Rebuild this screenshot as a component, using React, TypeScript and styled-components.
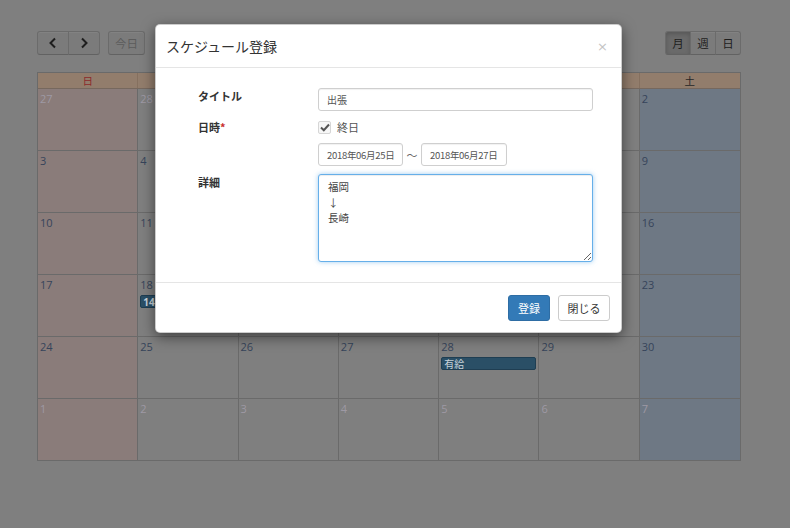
import React from "react";
import styled, { createGlobalStyle } from "styled-components";

const GlobalStyle = createGlobalStyle`
  html, body { margin: 0; padding: 0; }
  body {
    background: #7f7f7f;
    font-family: "Noto Sans CJK JP", "Open Sans", sans-serif;
  }
  * { box-sizing: border-box; }
`;

const Page = styled.div`
  position: relative;
  width: 790px;
  height: 528px;
  overflow: hidden;
  padding: 31px 49px 0 37px;
  background: #7f7f7f;
`;

const Toolbar = styled.div`
  display: flex;
  justify-content: space-between;
  align-items: center;
  height: 24px;
  margin-bottom: 17px;
`;

const ToolGroup = styled.div`
  display: flex;
  align-items: center;
  gap: 8px;
`;

const ButtonGroup = styled.div`
  display: flex;
`;

const ToolButton = styled.div<{ $w: number; $active?: boolean; $disabled?: boolean }>`
  width: ${(p) => p.$w}px;
  height: 24px;
  display: flex;
  align-items: center;
  justify-content: center;
  background: ${(p) => (p.$active ? "#6a6a6a" : "#7b7b7b")};
  box-shadow: ${(p) => (p.$active ? "inset 0 2px 4px rgba(0,0,0,0.18)" : "inset 0 1px 0 rgba(255,255,255,0.06)")};
  border: 1px solid #6b6b6b;
  border-bottom-color: #626262;
  color: ${(p) => (p.$disabled ? "#5c5c5c" : "#1e1e1e")};
  font-size: 11.5px;
  border-radius: 3px;
  ${ButtonGroup} > & {
    border-radius: 0;
    margin-left: -1px;
  }
  ${ButtonGroup} > &:first-child {
    border-radius: 3px 0 0 3px;
    margin-left: 0;
  }
  ${ButtonGroup} > &:last-child {
    border-radius: 0 3px 3px 0;
  }
`;

const Calendar = styled.div`
  width: 704px;
  border: 1px solid #6a6a6a;
  display: flex;
  flex-direction: column;
`;

const HeaderRow = styled.div`
  display: grid;
  grid-template-columns: repeat(7, 1fr);
  background: #927d6c;
  border-bottom: 1px solid #76685e;
`;

const HeaderCell = styled.div<{ $kind: "sun" | "sat" | "wd" }>`
  height: 15px;
  line-height: 15px;
  text-align: center;
  font-size: 10.5px;
  color: ${(p) => (p.$kind === "sun" ? "#8c2a2a" : "#262626")};
  border-right: 1px solid #85705f;
  &:last-child { border-right: 0; }
`;

const WeekRow = styled.div`
  display: grid;
  grid-template-columns: repeat(7, 1fr);
  height: 62px;
  border-bottom: 1px solid #6a6a6a;
  &:last-child { border-bottom: 0; height: 61px; }
`;

const DayCell = styled.div<{ $kind: "sun" | "sat" | "wd" }>`
  position: relative;
  background: ${(p) => (p.$kind === "sun" ? "#8a7c7a" : p.$kind === "sat" ? "#6e7884" : "#7f7f7f")};
  border-right: 1px solid #6a6a6a;
  padding: 3px 2px 0 2px;
  display: flex;
  flex-direction: column;
  gap: 4px;
  &:last-child { border-right: 0; }
`;

const DayNum = styled.div<{ $other: boolean }>`
  font-family: "Open Sans", "Noto Sans", sans-serif;
  font-size: 11px;
  line-height: 13px;
  color: ${(p) => (p.$other ? "#9e99a4" : "#36445a")};
`;

const Event = styled.div`
  height: 13px;
  line-height: 11px;
  background: #2a4f66;
  border: 1px solid #1f3e52;
  border-radius: 2px;
  color: #c9d4db;
  font-size: 10px;
  padding: 0 2px;
  white-space: nowrap;
  overflow: hidden;
`;

const EventTime = styled.span`
  font-weight: 700;
  font-family: "Open Sans", sans-serif;
`;

const Backdrop = styled.div`
  position: absolute;
  inset: 0;
  padding: 24px 0 0 155px;
`;

const Dialog = styled.div`
  width: 467px;
  background: #fff;
  border-radius: 5px;
  box-shadow: 0 4px 14px rgba(0, 0, 0, 0.5);
  border: 1px solid rgba(0, 0, 0, 0.2);
`;

const DialogHeader = styled.div`
  height: 43px;
  padding: 0 13px 0 10px;
  display: flex;
  align-items: center;
  justify-content: space-between;
  border-bottom: 1px solid #e5e5e5;
`;

const DialogTitle = styled.div`
  font-size: 14px;
  color: #333;
`;

const Close = styled.div`
  font-family: "DejaVu Sans", sans-serif;
  font-size: 13px;
  color: #c4c4c4;
`;

const DialogBody = styled.div`
  padding: 20px 28px 20px 42px;
  display: flex;
  flex-direction: column;
  gap: 8px;
`;

const FormRow = styled.div`
  display: grid;
  grid-template-columns: 120px 275px;
`;

const Label = styled.div`
  font-size: 11px;
  line-height: 14px;
  padding-top: 1px;
  font-weight: 700;
  color: #333;
`;

const Required = styled.span`
  color: #c9302c;
`;

const Field = styled.div`
  display: flex;
  flex-direction: column;
  gap: 8px;
`;

const TextInput = styled.div<{ $w?: number }>`
  width: ${(p) => (p.$w ? `${p.$w}px` : "100%")};
  height: 23px;
  border: 1px solid #cfcfcf;
  border-radius: 3px;
  box-shadow: inset 0 1px 1px rgba(0, 0, 0, 0.06);
  padding: 0 0 0 8px;
  display: flex;
  align-items: center;
  font-size: ${(p) => (p.$w ? "9.5px" : "10px")};
  letter-spacing: ${(p) => (p.$w ? "-0.3px" : "0")};
  white-space: nowrap;
  overflow: hidden;
  color: #555;
`;

const CheckLine = styled.div`
  display: flex;
  align-items: center;
  height: 16px;
  gap: 6px;
  font-size: 11px;
  color: #555;
`;

const CheckBox = styled.div`
  width: 13px;
  height: 13px;
  border: 1px solid #d6d6d6;
  border-radius: 2px;
  background: #f7f7f7;
  display: flex;
  align-items: center;
  justify-content: center;
`;

const DateLine = styled.div`
  display: flex;
  align-items: center;
`;

const Tilde = styled.div`
  width: 18px;
  text-align: center;
  font-size: 11px;
  color: #666;
`;

const TextArea = styled.textarea`
  width: 275px;
  height: 88px;
  border: 1px solid #66afe9;
  border-radius: 3px;
  box-shadow: inset 0 1px 1px rgba(0, 0, 0, 0.075), 0 0 5px rgba(102, 175, 233, 0.6);
  outline: none;
  padding: 4px 9px;
  font-family: "Noto Sans CJK JP", sans-serif;
  font-size: 10.5px;
  line-height: 15.5px;
  color: #444;
  margin: 0;
  display: block;
`;

const DialogFooter = styled.div`
  border-top: 1px solid #e5e5e5;
  padding: 12px 11px 11px;
  display: flex;
  justify-content: flex-end;
  gap: 8px;
`;

const Btn = styled.div<{ $primary?: boolean; $w: number }>`
  width: ${(p) => p.$w}px;
  height: 26px;
  display: flex;
  align-items: center;
  justify-content: center;
  border-radius: 3px;
  font-size: 11px;
  background: ${(p) => (p.$primary ? "#337ab7" : "#fff")};
  border: 1px solid ${(p) => (p.$primary ? "#2e6da4" : "#ccc")};
  color: ${(p) => (p.$primary ? "#fff" : "#333")};
`;

type Day = { n: number; other?: boolean; event?: React.ReactNode };

const weeks: Day[][] = [
  [{ n: 27, other: true }, { n: 28, other: true }, { n: 29, other: true }, { n: 30, other: true }, { n: 31, other: true }, { n: 1 }, { n: 2 }],
  [{ n: 3 }, { n: 4 }, { n: 5 }, { n: 6 }, { n: 7 }, { n: 8 }, { n: 9 }],
  [{ n: 10 }, { n: 11 }, { n: 12 }, { n: 13 }, { n: 14 }, { n: 15 }, { n: 16 }],
  [
    { n: 17 },
    { n: 18, event: (<><EventTime>14:00</EventTime> 会議</>) },
    { n: 19 }, { n: 20 }, { n: 21 }, { n: 22 }, { n: 23 },
  ],
  [{ n: 24 }, { n: 25 }, { n: 26 }, { n: 27 }, { n: 28, event: "有給" }, { n: 29 }, { n: 30 }],
  [1, 2, 3, 4, 5, 6, 7].map((n) => ({ n, other: true })),
];

const weekdays = ["日", "月", "火", "水", "木", "金", "土"];
const kindOf = (i: number): "sun" | "sat" | "wd" => (i === 0 ? "sun" : i === 6 ? "sat" : "wd");

const Chevron = ({ dir }: { dir: "left" | "right" }) => (
  <svg width="10" height="12" viewBox="0 0 10 12">
    <polyline
      points={dir === "left" ? "7,1.5 2.5,6 7,10.5" : "3,1.5 7.5,6 3,10.5"}
      fill="none"
      stroke="#1e1e1e"
      strokeWidth="2"
    />
  </svg>
);

export default function App() {
  return (
    <>
      <GlobalStyle />
      <Page>
        <Toolbar>
          <ToolGroup>
            <ButtonGroup>
              <ToolButton $w={32}><Chevron dir="left" /></ToolButton>
              <ToolButton $w={32}><Chevron dir="right" /></ToolButton>
            </ButtonGroup>
            <ToolButton $w={37} $disabled>今日</ToolButton>
          </ToolGroup>
          <ButtonGroup>
            <ToolButton $w={26} $active>月</ToolButton>
            <ToolButton $w={26}>週</ToolButton>
            <ToolButton $w={26}>日</ToolButton>
          </ButtonGroup>
        </Toolbar>
        <Calendar>
          <HeaderRow>
            {weekdays.map((w, i) => (
              <HeaderCell key={w} $kind={kindOf(i)}>{w}</HeaderCell>
            ))}
          </HeaderRow>
          {weeks.map((week, wi) => (
            <WeekRow key={wi}>
              {week.map((d, i) => (
                <DayCell key={i} $kind={kindOf(i)}>
                  <DayNum $other={!!d.other}>{d.n}</DayNum>
                  {d.event && <Event>{d.event}</Event>}
                </DayCell>
              ))}
            </WeekRow>
          ))}
        </Calendar>

        <Backdrop>
          <Dialog>
            <DialogHeader>
              <DialogTitle>スケジュール登録</DialogTitle>
              <Close>×</Close>
            </DialogHeader>
            <DialogBody>
              <FormRow>
                <Label>タイトル</Label>
                <TextInput>出張</TextInput>
              </FormRow>
              <FormRow>
                <Label>日時<Required>*</Required></Label>
                <Field>
                  <CheckLine>
                    <CheckBox>
                      <svg width="10" height="9" viewBox="0 0 10 9">
                        <polyline points="1,4.5 3.8,7.2 9,1.5" fill="none" stroke="#555" strokeWidth="2" />
                      </svg>
                    </CheckBox>
                    終日
                  </CheckLine>
                  <DateLine>
                    <TextInput $w={85}>2018年06月25日</TextInput>
                    <Tilde>〜</Tilde>
                    <TextInput $w={86}>2018年06月27日</TextInput>
                  </DateLine>
                </Field>
              </FormRow>
              <FormRow>
                <Label>詳細</Label>
                <TextArea readOnly defaultValue={"福岡\n↓\n長崎"} />
              </FormRow>
            </DialogBody>
            <DialogFooter>
              <Btn $primary $w={42}>登録</Btn>
              <Btn $w={52}>閉じる</Btn>
            </DialogFooter>
          </Dialog>
        </Backdrop>
      </Page>
    </>
  );
}
